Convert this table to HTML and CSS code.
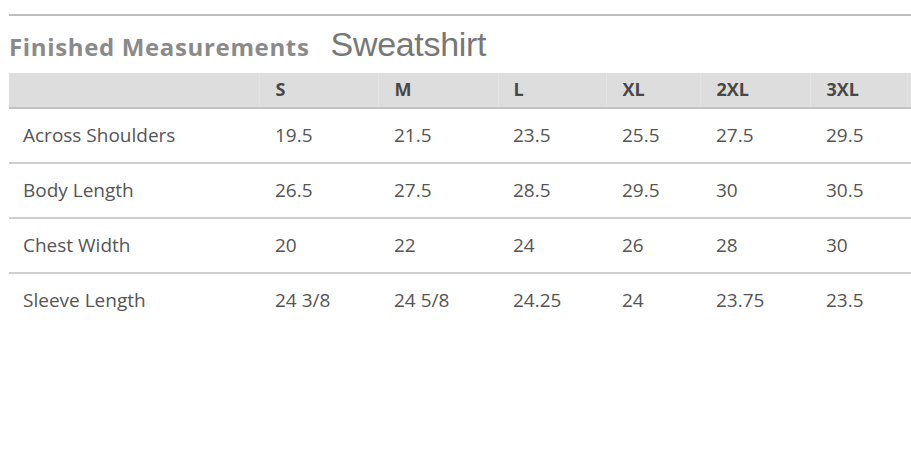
FILE: index.html
```html
<!DOCTYPE html>
<html>
<head>
<meta charset="utf-8">
<link rel="stylesheet" href="styles.css">
</head>
<body>
<div class="page">
  <div class="rule"></div>
  <h2 class="title"><span class="title-main">Finished Measurements</span><span class="title-sub">Sweatshirt</span></h2>
  <table class="sizes">
    <colgroup>
      <col class="c-label"><col class="c-s"><col class="c-m"><col class="c-l"><col class="c-xl"><col class="c-2xl"><col class="c-3xl"><col class="c-end">
    </colgroup>
    <thead>
      <tr><th></th><th>S</th><th>M</th><th>L</th><th>XL</th><th>2XL</th><th>3XL</th><th class="end"></th></tr>
    </thead>
    <tbody>
      <tr><td>Across Shoulders</td><td>19.5</td><td>21.5</td><td>23.5</td><td>25.5</td><td>27.5</td><td>29.5</td><td class="end"></td></tr>
      <tr><td>Body Length</td><td>26.5</td><td>27.5</td><td>28.5</td><td>29.5</td><td>30</td><td>30.5</td><td class="end"></td></tr>
      <tr><td>Chest Width</td><td>20</td><td>22</td><td>24</td><td>26</td><td>28</td><td>30</td><td class="end"></td></tr>
      <tr class="last"><td>Sleeve Length</td><td>24 3/8</td><td>24 5/8</td><td>24.25</td><td>24</td><td>23.75</td><td>23.5</td><td class="end"></td></tr>
    </tbody>
  </table>
</div>
</body>
</html>
```

FILE: styles.css
```css
html, body {
  margin: 0;
  padding: 0;
  background: #ffffff;
}
.page {
  padding: 14px 0 0 9px;
  font-family: "Open Sans", "DejaVu Sans", sans-serif;
}
.rule {
  height: 2px;
  background: #bdbdbd;
}
.title {
  margin: 0;
  height: 57px;
  display: flex;
  align-items: baseline;
  line-height: 57px;
  font-weight: normal;
}
.title-main {
  font-family: "Open Sans", sans-serif;
  font-weight: 700;
  font-size: 24px;
  color: #8a8a8a;
  letter-spacing: 0.65px;
}
.title-sub {
  font-family: "Liberation Sans", Arial, sans-serif;
  font-size: 34px;
  color: #777777;
  margin-left: 21px;
  letter-spacing: -0.3px;
}
.sizes {
  border-collapse: collapse;
  width: 902px;
  table-layout: fixed;
}
.c-label { width: 250px; }
.c-s { width: 119px; }
.c-m { width: 120px; }
.c-l { width: 108px; }
.c-xl { width: 94px; }
.c-2xl { width: 110px; }
.c-3xl { width: 97px; }
.c-end { width: 4px; }
.sizes thead th {
  background: #dddddd;
  height: 31px;
  padding: 0 0 3px 16px;
  text-align: left;
  font-size: 18px;
  font-weight: 700;
  color: #484848;
  border-left: 1px solid #e4e4e4;
  border-bottom: 2px solid #c2c2c2;
}
.sizes thead th:first-child {
  border-left: none;
}
.sizes thead th:nth-child(4) {
  padding-left: 15px;
}
.sizes td {
  height: 51px;
  padding: 0 0 2px 16px;
  font-size: 19px;
  color: #555555;
  border-bottom: 2px solid #cfcfcf;
  white-space: nowrap;
}
.sizes td:first-child {
  padding-left: 14px;
}
.sizes td:nth-child(4) {
  padding-left: 15px;
}
.sizes td.end, .sizes th.end {
  padding: 0;
}
.sizes tr.last td {
  border-bottom: none;
}
```
